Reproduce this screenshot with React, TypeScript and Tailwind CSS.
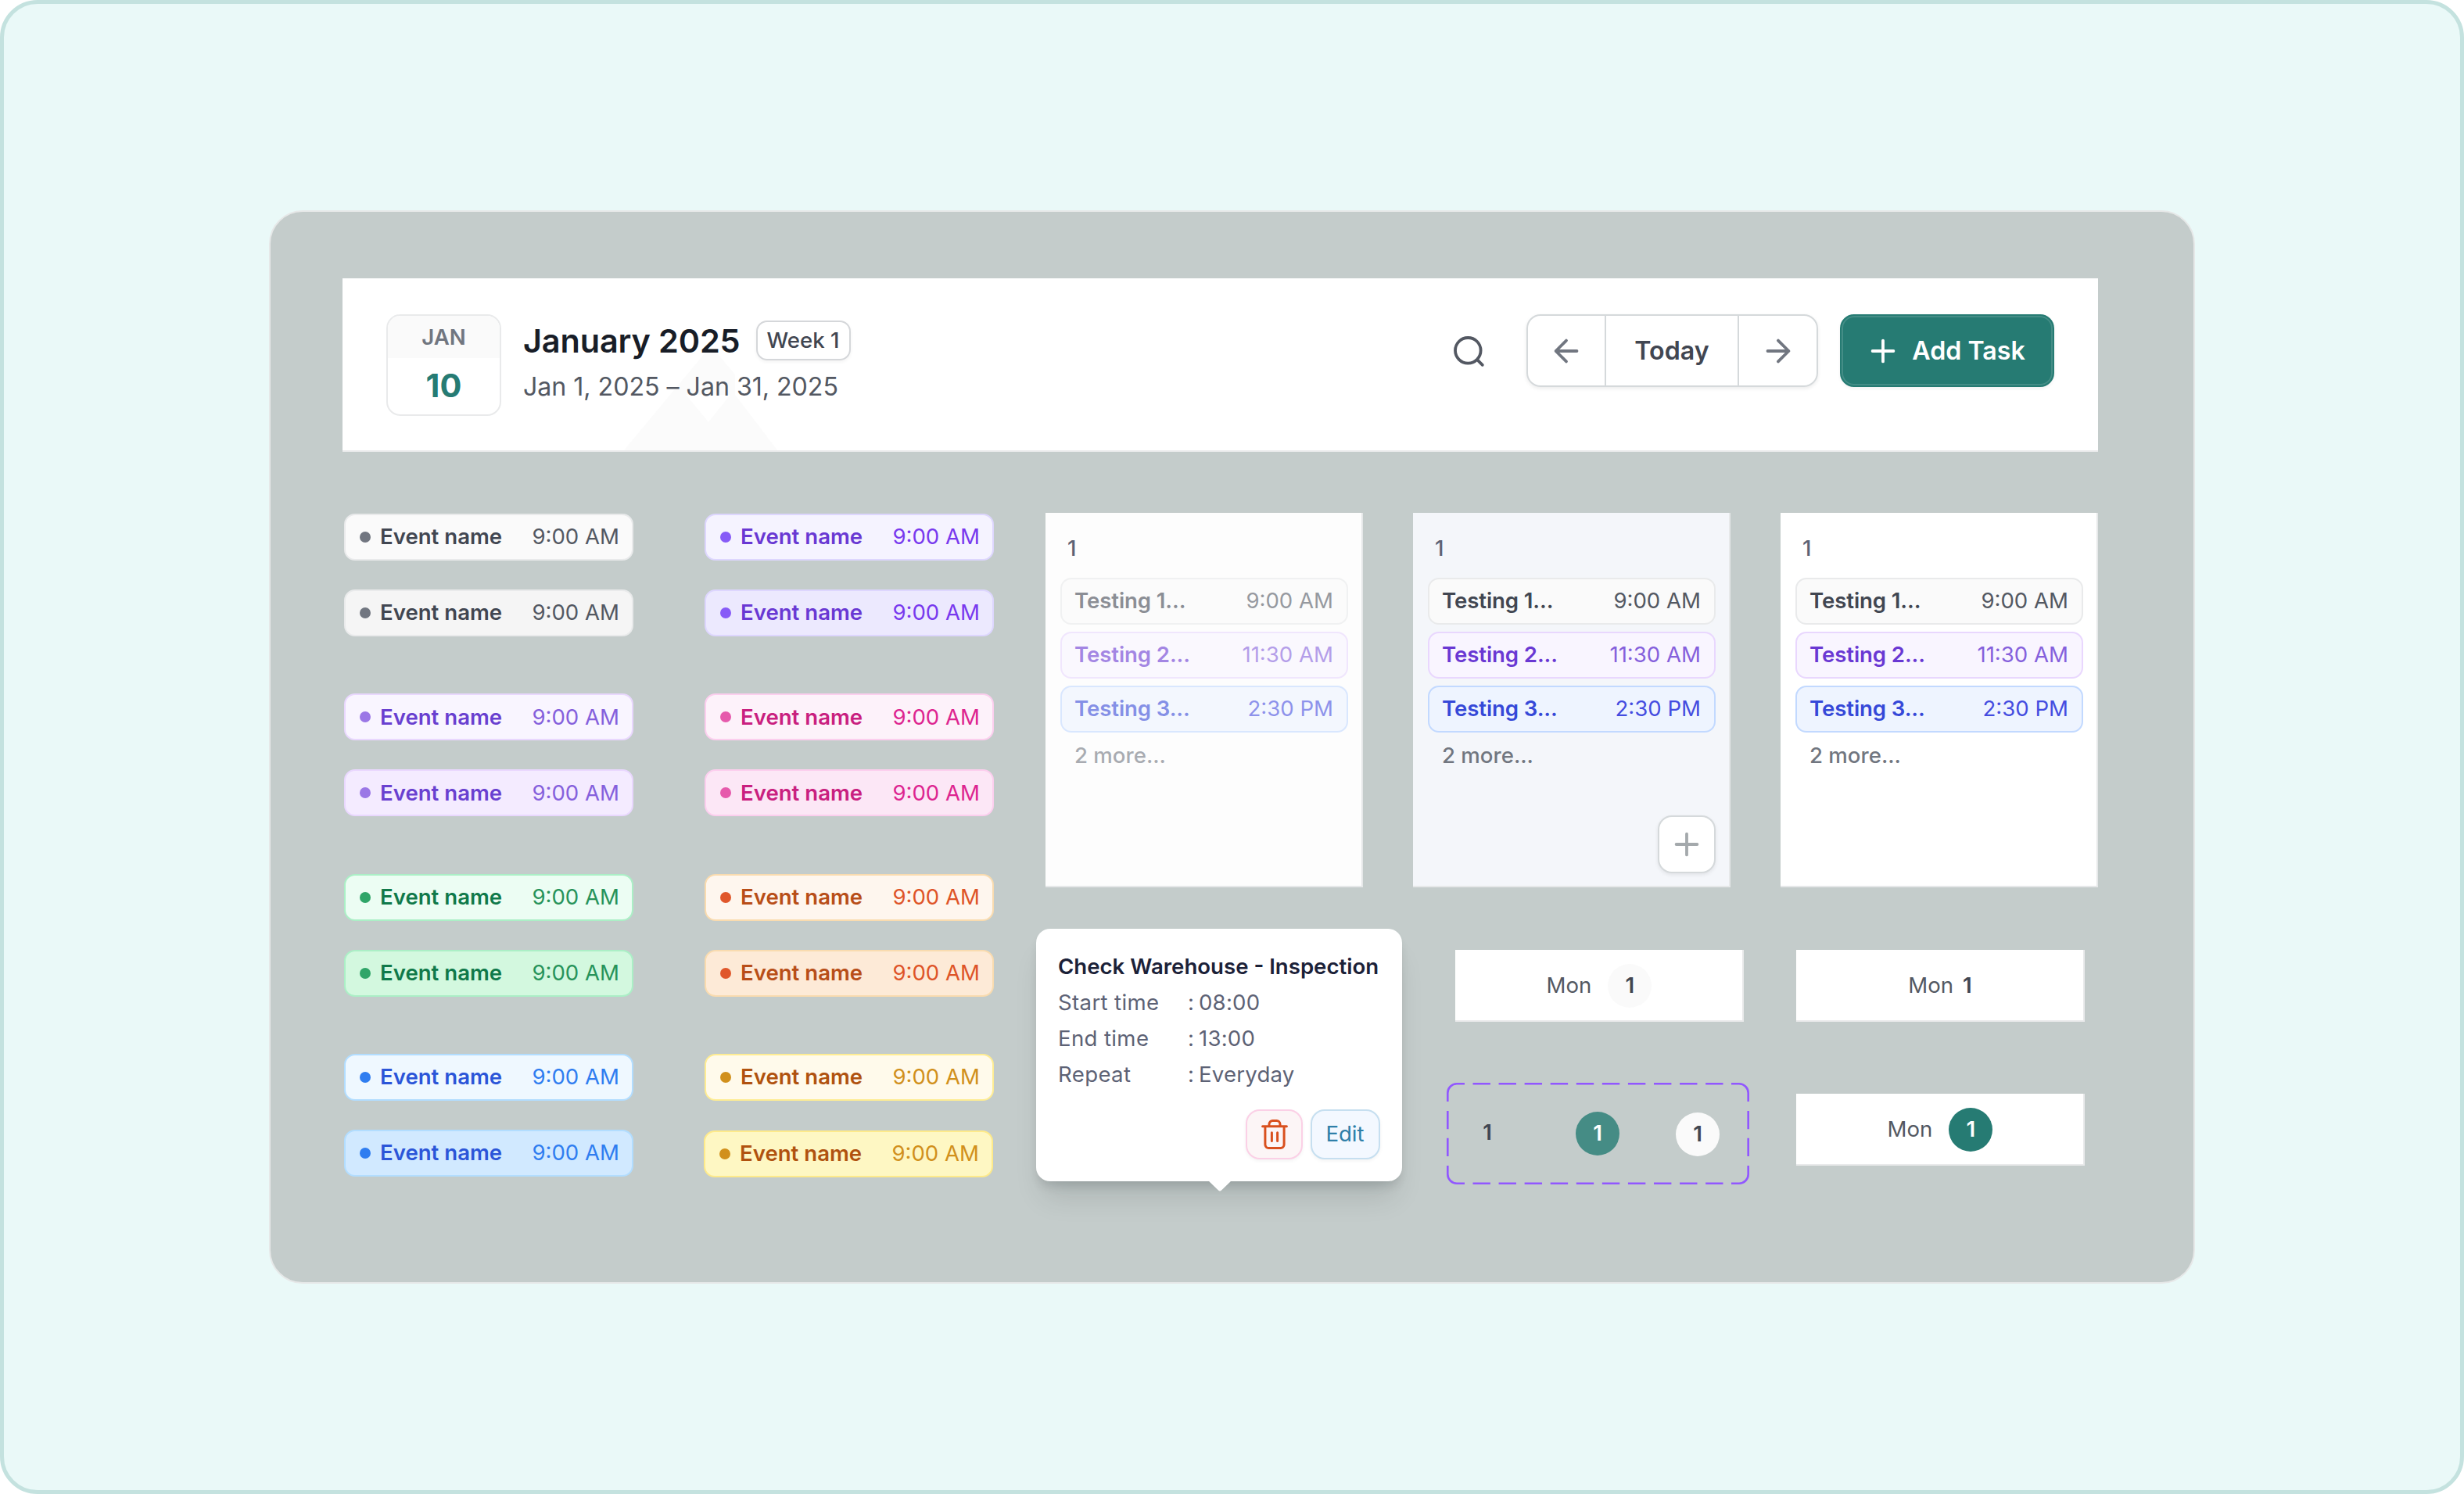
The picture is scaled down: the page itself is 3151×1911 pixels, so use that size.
import type { ReactNode } from "react";
import { clsx } from "clsx";

interface Tone {
  chip: string;
  dot: string;
  name: string;
  time: string;
}

const slate = { dot: "bg-[#717680]", name: "text-[#414651]", time: "text-[#535862]" };
const violet = { dot: "bg-[#875bf7]", name: "text-[#6938d3]", time: "text-[#7839ee]" };
const purple = { dot: "bg-[#9b77e6]", name: "text-[#6940d0]", time: "text-[#8560dc]" };
const pink = { dot: "bg-[#e65aac]", name: "text-[#c9207f]", time: "text-[#dd2590]" };
const green = { dot: "bg-[#2fa568]", name: "text-[#10794a]", time: "text-[#27935a]" };
const orange = { dot: "bg-[#e0572b]", name: "text-[#b84e18]", time: "text-[#de5428]" };
const blue = { dot: "bg-[#2f7df0]", name: "text-[#2b55d8]", time: "text-[#2f7df0]" };
const yellow = { dot: "bg-[#d1901c]", name: "text-[#b0520f]", time: "text-[#d1901c]" };

/** Each pair is the default tone followed by its hover tone. */
const leftPairs: Tone[][] = [
  [
    { ...slate, chip: "border-[#e9eaeb] bg-[#fafafa]" },
    { ...slate, chip: "border-[#e9eaeb] bg-[#f5f5f5]" },
  ],
  [
    { ...purple, chip: "border-[#e9d7fe] bg-[#f9f5ff]" },
    { ...purple, chip: "border-[#e9d7fe] bg-[#f4ebff]" },
  ],
  [
    { ...green, chip: "border-[#abefc6] bg-[#ecfdf3]" },
    { ...green, chip: "border-[#abefc6] bg-[#d3f8df]" },
  ],
  [
    { ...blue, chip: "border-[#b2ddff] bg-[#eff8ff]" },
    { ...blue, chip: "border-[#b2ddff] bg-[#d1e9ff]" },
  ],
];

const rightPairs: Tone[][] = [
  [
    { ...violet, chip: "border-[#ddd6fe] bg-[#f5f3ff]" },
    { ...violet, chip: "border-[#ddd6fe] bg-[#ece9fe]" },
  ],
  [
    { ...pink, chip: "border-[#fcceee] bg-[#fdf2fa]" },
    { ...pink, chip: "border-[#fcceee] bg-[#fce7f6]" },
  ],
  [
    { ...orange, chip: "border-[#f9dbaf] bg-[#fef6ee]" },
    { ...orange, chip: "border-[#f9dbaf] bg-[#fdead7]" },
  ],
  [
    { ...yellow, chip: "border-[#feec93] bg-[#fffaeb]" },
    { ...yellow, chip: "-ml-px mt-px border-[#feea8a] bg-[#fef7c3]" },
  ],
];

const tasks = [
  {
    label: "Testing 1...",
    time: "9:00 AM",
    chip: "border-[#e9eaeb] bg-[#fafafa]",
    name: "text-[#414651]",
    timeColor: "text-[#535862]",
  },
  {
    label: "Testing 2...",
    time: "11:30 AM",
    chip: "border-[#e9d7fe] bg-[#f9f5ff]",
    name: "text-[#6938d3]",
    timeColor: "text-[#8560dc]",
  },
  {
    label: "Testing 3...",
    time: "2:30 PM",
    chip: "border-[#c2d9ff] bg-[#eef4ff]",
    name: "text-[#3548d8]",
    timeColor: "text-[#444ce0]",
  },
];

const details = [
  ["Start time", "08:00"],
  ["End time", "13:00"],
  ["Repeat", "Everyday"],
];

interface IconProps {
  children: ReactNode;
  className?: string;
}

const Icon = ({ children, className }: IconProps) => (
  <svg
    aria-hidden="true"
    className={clsx("size-[46px]", className)}
    fill="none"
    stroke="currentColor"
    strokeLinecap="round"
    strokeLinejoin="round"
    strokeWidth="3.8"
    viewBox="0 0 46 46"
  >
    {children}
  </svg>
);

const SearchIcon = () => (
  <Icon className="text-[#535862]">
    <circle cx="22.3" cy="22.3" r="16.3" />
    <path d="m34.6 34.6 6.2 6.2" />
  </Icon>
);

const ArrowLeftIcon = () => (
  <Icon className="text-[#717680]">
    <path d="M36.5 23H9.6M23 36.4 9.6 23 23 9.6" />
  </Icon>
);

const ArrowRightIcon = () => (
  <Icon className="text-[#717680]">
    <path d="M9.5 23h26.9M23 9.6 36.4 23 23 36.4" />
  </Icon>
);

const PlusIcon = ({ className }: { className?: string }) => (
  <Icon className={className}>
    <path d="M23 9.6v26.8M9.6 23h26.8" />
  </Icon>
);

const TrashIcon = () => (
  <svg
    aria-hidden="true"
    className="h-[38px] w-[34px] text-[#d9501e]"
    fill="none"
    stroke="currentColor"
    strokeLinecap="round"
    strokeLinejoin="round"
    strokeWidth="3"
    viewBox="0 0 34 38"
  >
    <path d="M1.6 8.7h30.8M4.9 8.7v23.4a4.4 4.4 0 0 0 4.4 4.4h15.4a4.4 4.4 0 0 0 4.4-4.4V8.7M10 8.7V6a4.4 4.4 0 0 1 4.4-4.4h5.2A4.4 4.4 0 0 1 24 6v2.7M13.4 16.7v10.9M20.6 16.7v10.9" />
  </svg>
);

/** Faint twin peaks along the bottom edge of the header. */
const Peaks = () => (
  <svg
    aria-hidden="true"
    className="absolute bottom-0 left-[360px] h-[126px] w-[196px]"
    viewBox="0 0 196 126"
  >
    <path
      d="M0 126 104 1h14l24 28v26l54 71ZM79 55l29 35 28-35Z"
      fill="#fbfbfb"
      fillRule="evenodd"
    />
  </svg>
);

const Header = () => (
  <header className="relative flex h-[222px] w-[2245px] items-start justify-between border-b-2 border-[#e9eaeb] bg-white px-14 pt-[46px]">
    <Peaks />
    <div className="relative flex gap-[29px]">
      <div className="flex h-[130px] w-[147px] flex-col overflow-hidden rounded-[18px] border-2 border-[#e9eaeb] bg-white text-center">
        <div className="h-[54px] bg-[#fafafa] text-[27.6px] leading-[55px] font-semibold text-[#717680]">
          JAN
        </div>
        <div className="text-[41.4px] leading-[71px] font-bold text-[#267b73]">
          10
        </div>
      </div>
      <div className="-ml-px">
        <div className="flex h-[67px] items-center gap-[20px]">
          <h1 className="pt-px text-[41.4px] leading-[66px] font-semibold tracking-[-0.12px] text-[#181d27]">
            January 2025
          </h1>
          <span className="flex h-[51px] w-[121px] items-center justify-center rounded-[14px] border-2 border-[#d5d7da] text-[27.6px] font-medium text-[#414651] shadow-[0_2px_4px_rgba(10,13,18,0.05)]">
            Week 1
          </span>
        </div>
        <p className="mt-[3px] text-[32.2px] leading-[46px] tracking-[-0.05px] text-[#535862]">
          Jan 1, 2025 – Jan 31, 2025
        </p>
      </div>
    </div>
    <div className="flex items-center">
      <button className="mr-[51px]" type="button">
        <SearchIcon />
      </button>
      <div className="mr-7 flex h-[93px] w-[373px] overflow-hidden rounded-[18px] border-2 border-[#d5d9db] shadow-[0_2px_5px_rgba(10,13,18,0.08)]">
        <button
          className="flex w-[100px] items-center justify-center border-r-2 border-[#d5d9db]"
          type="button"
        >
          <ArrowLeftIcon />
        </button>
        <button
          className="flex-1 border-r-2 border-[#d5d9db] pt-[2px] text-[32.2px] font-semibold text-[#414651]"
          type="button"
        >
          Today
        </button>
        <button
          className="flex w-[99px] items-center justify-center"
          type="button"
        >
          <ArrowRightIcon />
        </button>
      </div>
      <button
        className="flex h-[93px] w-[274px] items-center justify-center gap-[14px] rounded-[18px] border-2 border-[#267b73] bg-[#267b73] pr-[5px] text-[32.2px] font-semibold text-white shadow-[0_2px_4px_rgba(10,13,18,0.05),inset_0_0_0_2px_rgba(255,255,255,0.14)]"
        type="button"
      >
        <PlusIcon />
        <span className="pt-[2px]">Add Task</span>
      </button>
    </div>
  </header>
);

const EventChip = ({ tone }: { tone: Tone }) => (
  <div
    className={clsx(
      "flex h-[60px] w-[370px] items-center rounded-[14px] border-2 pr-4 pl-[18px] text-[27.6px]",
      tone.chip
    )}
  >
    <span className={clsx("mr-3 size-[14px] rounded-full", tone.dot)} />
    <span className={clsx("flex-1 font-semibold", tone.name)}>Event name</span>
    <span className={tone.time}>9:00 AM</span>
  </div>
);

const EventColumn = ({ pairs }: { pairs: Tone[][] }) => (
  <div className="flex flex-col gap-[73.4px] pt-px">
    {pairs.map((pair) => (
      <div className="flex flex-col gap-[37px]" key={pair[0].chip}>
        {pair.map((tone) => (
          <EventChip key={tone.chip} tone={tone} />
        ))}
      </div>
    ))}
  </div>
);

interface DayCellProps {
  className: string;
  faded?: boolean;
  showAdd?: boolean;
}

const DayCell = ({ className, faded = false, showAdd = false }: DayCellProps) => (
  <div
    className={clsx(
      "flex h-[479px] w-[406px] flex-col border-r-2 border-b-2 border-[#e6e8e9] pt-[25px] pr-[17px] pl-[19px] text-[27.6px]",
      className
    )}
  >
    <div className="pl-[9px] leading-[41px] font-medium text-[#5d6275]">1</div>
    <div
      className={clsx("mt-[17px] flex flex-col gap-[9px]", faded && "opacity-60")}
    >
      {tasks.map((task) => (
        <div
          className={clsx(
            "flex h-[60px] items-center justify-between rounded-[14px] border-2 pr-[17px] pl-4",
            task.chip
          )}
          key={task.label}
        >
          <span className={clsx("font-semibold tracking-[-0.1px]", task.name)}>
            {task.label}
          </span>
          <span className={task.timeColor}>{task.time}</span>
        </div>
      ))}
      <div className="pl-[18px] leading-[41px] font-medium text-[#717680]">
        2 more...
      </div>
    </div>
    {showAdd ? (
      <button
        className="mt-auto mb-4 flex size-[74px] items-center justify-center self-end rounded-[18px] border-2 border-[#d5d9db] bg-white text-[#a4a9ac] shadow-[0_2px_5px_rgba(10,13,18,0.08)]"
        type="button"
      >
        <PlusIcon />
      </button>
    ) : null}
  </div>
);

const TaskPopover = () => (
  <div className="relative h-[323px] w-[468px] rounded-[18px] bg-white px-7 pt-7 text-[27.6px] leading-[41.4px] shadow-[0_28px_37px_-9px_rgba(10,13,18,0.12),0_9px_14px_-4px_rgba(10,13,18,0.14)]">
    <div className="font-semibold whitespace-nowrap text-[#1b2138]">
      Check Warehouse - Inspection
    </div>
    {details.map(([label, value]) => (
      <div className="mt-[4.6px] flex text-[#5d6275]" key={label}>
        <span className="w-[166px] tracking-[0.35px]">{label}</span>
        <span className="w-[14px]">:</span>
        <span className="tracking-[0.2px]">{value}</span>
      </div>
    ))}
    <div className="mt-6 flex justify-end gap-[10px]">
      <button
        aria-label="Delete"
        className="flex h-16 w-[73px] items-center justify-center rounded-[18px] border-2 border-[#fbd0e6] bg-[#fcf5f6] shadow-[0_2px_4px_rgba(10,13,18,0.05)]"
        type="button"
      >
        <TrashIcon />
      </button>
      <button
        className="h-16 w-[89px] rounded-[18px] border-2 border-[#c6dff0] bg-[#f3f8ff] pr-px pb-px text-[#2f7fa8] shadow-[0_2px_4px_rgba(10,13,18,0.05)]"
        type="button"
      >
        Edit
      </button>
    </div>
    <svg
      aria-hidden="true"
      className="absolute top-[322px] left-[220px] h-[15px] w-[30px]"
      viewBox="0 0 30 15"
    >
      <path d="M0 0h30L17 12.6a3 3 0 0 1-4 0Z" fill="#fff" />
    </svg>
  </div>
);

interface DayBadgeProps {
  className?: string;
}

const DayBadge = ({ className }: DayBadgeProps) => (
  <span
    className={clsx(
      "flex size-14 items-center justify-center rounded-full font-semibold",
      className
    )}
  >
    1
  </span>
);

const WeekCard = ({ children }: { children: ReactNode }) => (
  <div className="flex h-[92px] w-[369px] items-center justify-center border-r-2 border-b-2 border-[#e9eaeb] bg-white pt-px pl-px text-[27.6px] text-[#535862]">
    {children}
  </div>
);

/** Component-set frame: rounded dashed outline around the badge variants. */
const BadgeVariants = () => (
  <div className="relative flex h-[130px] w-[387px] text-[27.6px]">
    <svg
      aria-hidden="true"
      className="absolute inset-0 size-full"
      fill="none"
      stroke="#9157ff"
      strokeWidth="2.6"
      viewBox="0 0 387 130"
    >
      <path d="M1.3 24V13A11.7 11.7 0 0 1 13 1.3h10M364 1.3h10A11.7 11.7 0 0 1 385.7 13v11M385.7 106v11a11.7 11.7 0 0 1-11.7 11.7h-10M23 128.7H13A11.7 11.7 0 0 1 1.3 117v-11" />
      <path d="M33.5 1.3h320M33.5 128.7h320" strokeDasharray="22.4 10.67" />
      <path d="M1.3 36v58M385.7 36v58" strokeDasharray="23.2 11.6" />
    </svg>
    <DayBadge className="mt-9 ml-[24px] text-[#414651]" />
    <DayBadge className="mt-[37px] ml-[85px] bg-[#458c85] text-white" />
    <DayBadge className="mt-[38px] ml-[72px] bg-[#fafafa] text-[#414651]" />
  </div>
);

export default function App() {
  return (
    <main className="flex h-[1911px] w-[3151px] rounded-[48px] border-[5px] border-[#c4e2df] bg-[#eaf9f8] pt-[264px] pl-[339px] font-['Inter',sans-serif]">
      <section className="h-[1373px] w-[2463px] rounded-[43px] border-2 border-[#e6e8e8] bg-[#c4cccb] pt-[85px] pl-[92px]">
        <Header />
        <div className="flex pt-[78px] pl-[2px]">
          <EventColumn pairs={leftPairs} />
          <div className="w-[91px]" />
          <EventColumn pairs={rightPairs} />
          <div className="ml-[66px]">
            <div className="flex gap-16">
              <DayCell className="bg-[#fdfdfd]" faded />
              <DayCell className="bg-[#f4f6fa]" showAdd />
              <DayCell className="bg-white" />
            </div>
            <div className="-ml-[12px] flex pt-[53px]">
              <TaskPopover />
              <div className="ml-[57px] flex flex-col gap-[78px] pt-[27px]">
                <div className="pl-[11px]">
                  <WeekCard>
                    Mon
                    <DayBadge className="ml-[21px] bg-[#fafafa] text-[#414651]" />
                  </WeekCard>
                </div>
                <BadgeVariants />
              </div>
              <div className="ml-[60px] flex flex-col gap-[92px] pt-[27px]">
                <WeekCard>
                  Mon
                  <span className="ml-3 font-semibold text-[#414651]">1</span>
                </WeekCard>
                <WeekCard>
                  Mon
                  <DayBadge className="ml-[21px] bg-[#267b73] text-white" />
                </WeekCard>
              </div>
            </div>
          </div>
        </div>
      </section>
    </main>
  );
}
